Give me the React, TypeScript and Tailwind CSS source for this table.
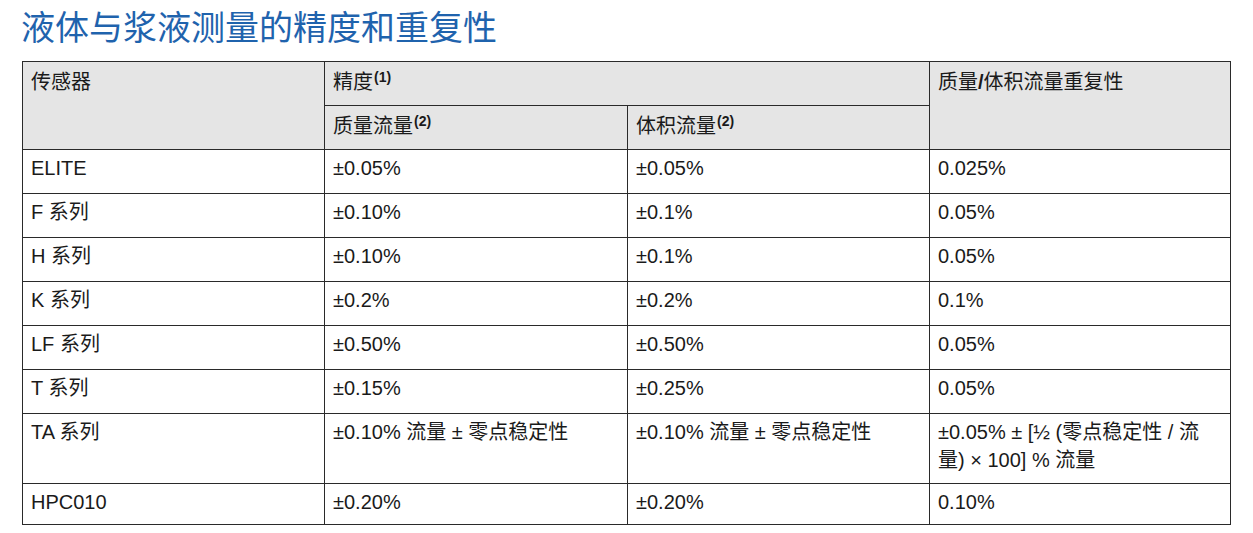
const rows: [string, string, string, string][] = [
  ["ELITE", "±0.05%", "±0.05%", "0.025%"],
  ["F 系列", "±0.10%", "±0.1%", "0.05%"],
  ["H 系列", "±0.10%", "±0.1%", "0.05%"],
  ["K 系列", "±0.2%", "±0.2%", "0.1%"],
  ["LF 系列", "±0.50%", "±0.50%", "0.05%"],
  ["T 系列", "±0.15%", "±0.25%", "0.05%"],
  ["TA 系列", "±0.10% 流量 ± 零点稳定性", "±0.10% 流量 ± 零点稳定性", "±0.05% ± [½ (零点稳定性 / 流量) × 100] % 流量"],
  ["HPC010", "±0.20%", "±0.20%", "0.10%"],
];

const base = "border border-[#2a2a2a] align-top px-[8px] text-left font-normal";
const cell = base + " pt-[4px]";
const head = base + " pt-[6px] bg-[#e5e5e5]";

function Sup({ n }: { n: number }) {
  return <sup className="text-[14px] font-bold ml-[1px]">({n})</sup>;
}

export default function App() {
  return (
    <div
      className="w-[1253px] h-[533px] bg-white text-[#1a1a1a] overflow-hidden"
      style={{ fontFamily: '"Liberation Sans", "Noto Sans CJK SC", sans-serif' }}
    >
      <h1 className="pl-[21px] pt-[6px] h-[61px] text-[34px] leading-[44px] text-[#1f63ad] font-normal">
        液体与浆液测量的精度和重复性
      </h1>
      <table className="ml-[22px] border-collapse table-fixed text-[20px] leading-[28px]">
        <colgroup>
          <col className="w-[302px]" />
          <col className="w-[303px]" />
          <col className="w-[302px]" />
          <col className="w-[301px]" />
        </colgroup>
        <thead>
          <tr className="h-[44px]">
            <th rowSpan={2} className={head}>传感器</th>
            <th colSpan={2} className={head}>
              精度<Sup n={1} />
            </th>
            <th rowSpan={2} className={head}>
              质量<span className="font-bold">/</span>体积流量重复性
            </th>
          </tr>
          <tr className="h-[44px]">
            <th className={head}>
              质量流量<Sup n={2} />
            </th>
            <th className={head}>
              体积流量<Sup n={2} />
            </th>
          </tr>
        </thead>
        <tbody>
          {rows.map((r, i) => (
            <tr key={i} className={i === 6 ? "h-[70px]" : i === 7 ? "h-[41px]" : "h-[44px]"}>
              {r.map((c, j) => (
                <td key={j} className={cell}>
                  {c}
                </td>
              ))}
            </tr>
          ))}
        </tbody>
      </table>
    </div>
  );
}
